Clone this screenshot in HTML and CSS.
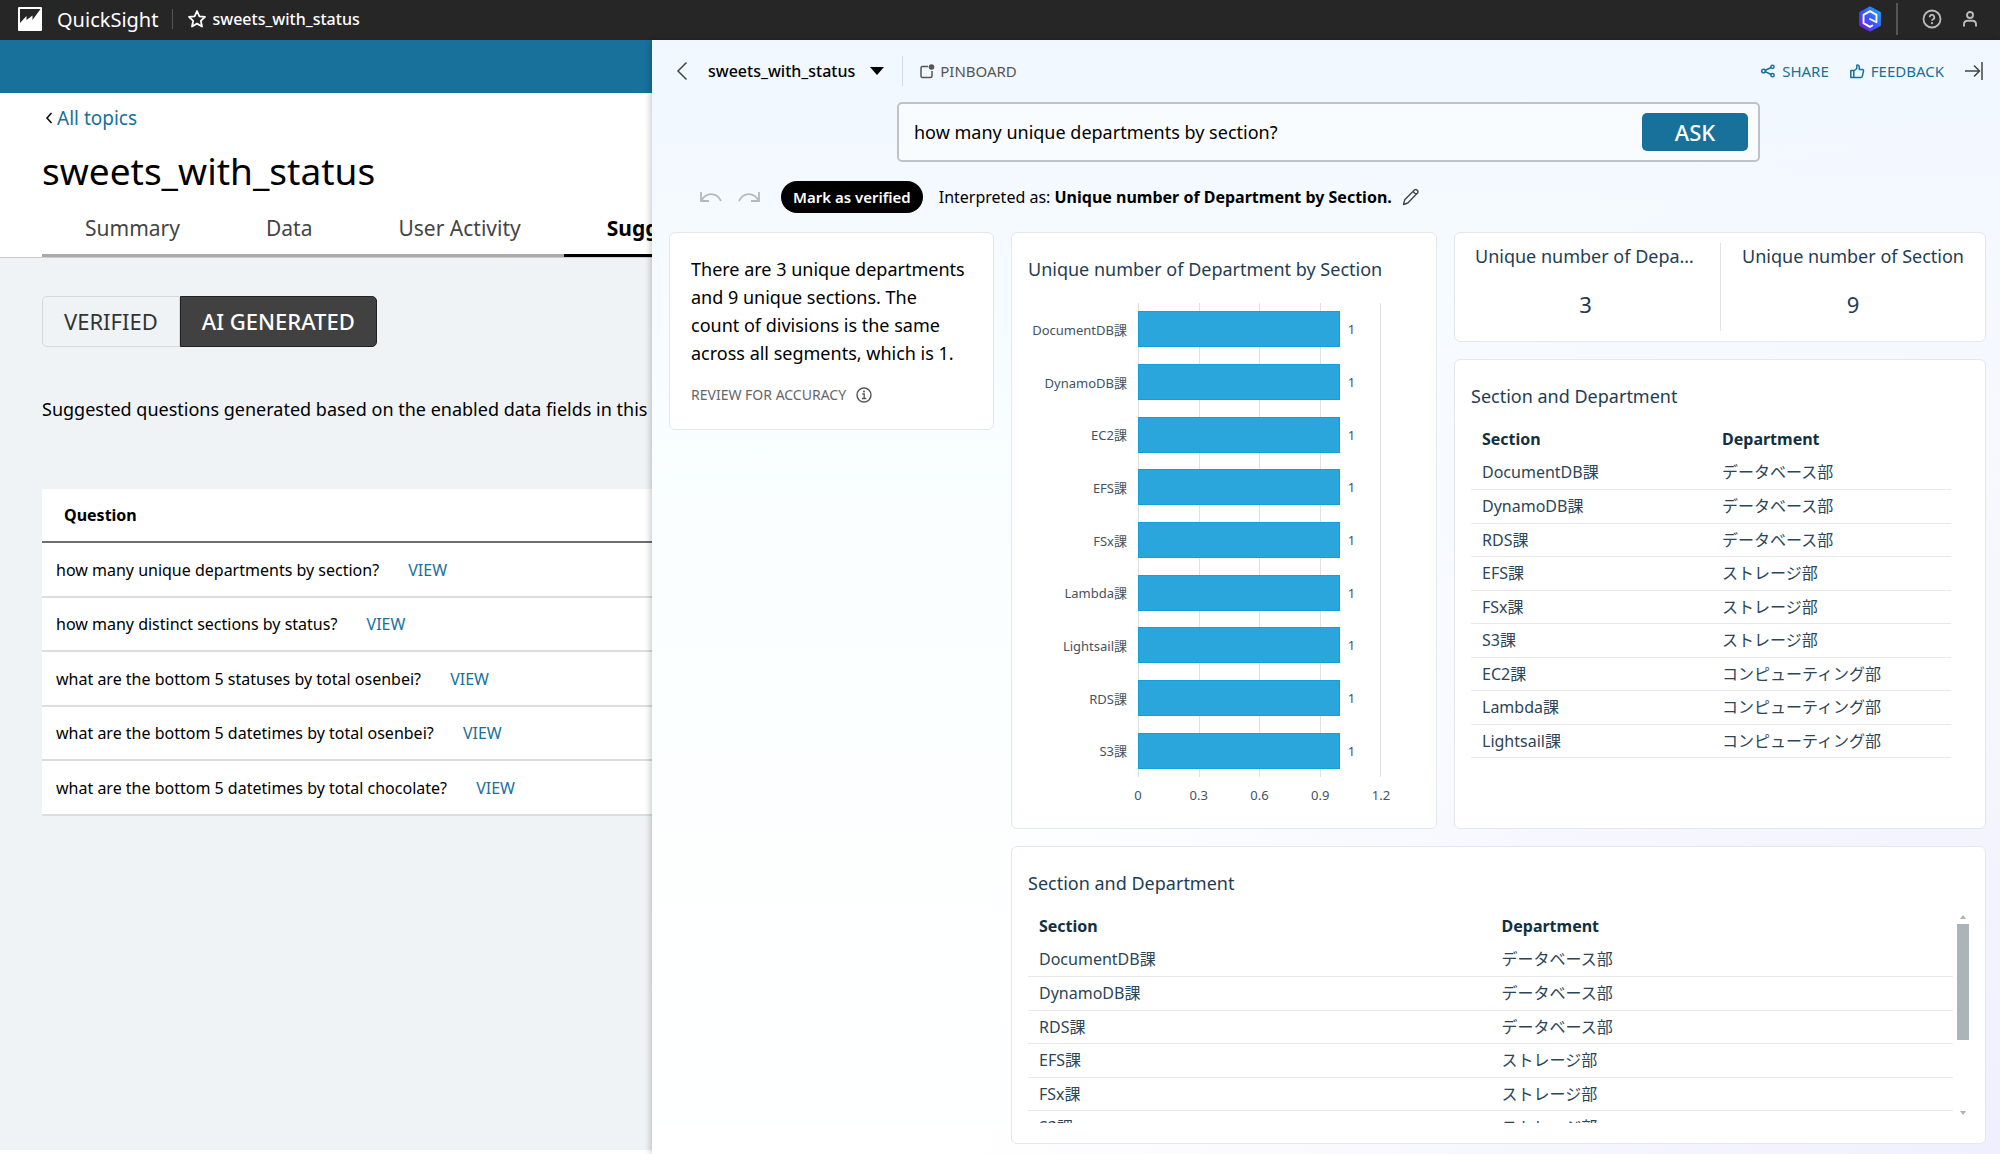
FILE: index.html
```html
<!DOCTYPE html>
<html lang="en">
<head>
  <meta charset="UTF-8" />
  <meta name="viewport" content="width=device-width, initial-scale=1.0"/>
  <title>QuickSight - sweets_with_status</title>
  <link rel="stylesheet" href="styles.css">
</head>
<body>

  <header class="topbar">
    <svg class="logo" viewBox="0 0 26 26"><rect x="1" y="1" width="24" height="24" rx="1" fill="#fff"/><path d="M3 3h20.500L15.500 14V9.500L9.500 14V10L3 17z" fill="#262626"/></svg>
    <span class="brand">QuickSight</span>
    <span class="topbar-divider"></span>
    <svg class="star" viewBox="0 0 20 20"><path d="M10 2l2.400 5.300 5.600.6-4.200 3.900 1.200 5.700-5-2.900-5 2.900 1.200-5.700L2 7.900l5.600-.6z" fill="none" stroke="#fff" stroke-width="1.800" stroke-linejoin="round"/></svg>
    <span class="topic-name">sweets_with_status</span>

    <div class="topbar-right">
      <svg class="q-icon" viewBox="0 0 26 28">
        <defs><linearGradient id="qGrad" x1="1" y1="0" x2="0" y2="1"><stop offset="0" stop-color="#14b4ff"/><stop offset=".5" stop-color="#3b57ff"/><stop offset="1" stop-color="#7a10e0"/></linearGradient></defs>
        <path d="M13 1l11 6v14l-11 6-11-6V7z" fill="url(#qGrad)" stroke="url(#qGrad)" stroke-width="1.500" stroke-linejoin="round"/>
        <path d="M15.500 21L13 22.500l-7-4v-9l7-4 7 4v8L13 14" fill="none" stroke="#fff" stroke-width="2" stroke-linejoin="round" stroke-linecap="round"/>
      </svg>
      <span class="topbar-divider tall"></span>
      <button class="icon-btn help" aria-label="Help"><svg viewBox="0 0 20 20"><circle cx="10" cy="10" r="8.500" fill="none" stroke="#bbb" stroke-width="1.800"/><path d="M7.700 8.200a2.300 2.300 0 1 1 3.400 2c-.8.400-1.100.8-1.100 1.600" fill="none" stroke="#bbb" stroke-width="1.800"/><circle cx="10" cy="14.200" r="1.100" fill="#bbb"/></svg></button>
      <button class="icon-btn" aria-label="Account"><svg viewBox="0 0 20 20"><circle cx="10" cy="6" r="3" fill="none" stroke="#bbb" stroke-width="1.900"/><path d="M4 17.500v-2c0-2.400 1.600-3.700 3.600-3.700h4.800c2 0 3.600 1.300 3.600 3.700v2" fill="none" stroke="#bbb" stroke-width="1.900"/></svg></button>
    </div>
  </header>

  <main class="workspace">

    <section class="topic">
      <div class="banner"></div>

      <div class="topic-head">
        <a class="back-link" href="#"><svg viewBox="0 0 8 14"><path d="M6.500 2L2 7l4.500 5" fill="none" stroke="#000" stroke-width="1.500"/></svg>All topics</a>
        <h1>sweets_with_status</h1>
        <nav class="tabs">
          <a href="#">Summary</a>
          <a href="#">Data</a>
          <a href="#">User Activity</a>
          <a href="#" class="active">Suggested questions</a>
        </nav>
      </div>

      <div class="topic-body">
        <div class="toggle">
          <button>VERIFIED</button>
          <button class="on">AI GENERATED</button>
        </div>

        <p class="hint">Suggested questions generated based on the enabled data fields in this topic.</p>

        <table class="questions">
          <thead>
            <tr><th>Question</th></tr>
          </thead>
          <tbody>
            <tr><td>how many unique departments by section? <a href="#">VIEW</a></td></tr>
            <tr><td>how many distinct sections by status? <a href="#">VIEW</a></td></tr>
            <tr><td>what are the bottom 5 statuses by total osenbei? <a href="#">VIEW</a></td></tr>
            <tr><td>what are the bottom 5 datetimes by total osenbei? <a href="#">VIEW</a></td></tr>
            <tr><td>what are the bottom 5 datetimes by total chocolate? <a href="#">VIEW</a></td></tr>
          </tbody>
        </table>
      </div>
    </section>

    <section class="panel">
      <div class="panel-bar">
        <button class="icon-btn back" aria-label="Back"><svg viewBox="0 0 12 20"><path d="M10.500 1.500L2 10l8.500 8.500" fill="none" stroke="#444" stroke-width="1.500"/></svg></button>
        <button class="topic-select">sweets_with_status <svg viewBox="0 0 14 8"><path d="M0 0h14L7 8z" fill="#000"/></svg></button>
        <button class="pinboard"><svg viewBox="0 0 16 16"><path d="M9 3.500H3.500a1.500 1.500 0 0 0-1.500 1.500v8A1.500 1.500 0 0 0 3.500 14.500h8A1.500 1.500 0 0 0 13 13V8" fill="none" stroke="#555" stroke-width="1.500"/><circle cx="12.500" cy="4" r="2.800" fill="#555"/></svg>PINBOARD</button>
        <div class="panel-actions">
          <a href="#"><svg viewBox="0 0 16 16"><path d="M12 4L4 8l8 4" fill="none" stroke="#17719a" stroke-width="1.500"/><g fill="#f2f7ff" stroke="#17719a" stroke-width="1.500"><circle cx="3.500" cy="8" r="1.800"/><circle cx="12.500" cy="3.800" r="1.600"/><circle cx="12.500" cy="12.200" r="1.600"/></g></svg>SHARE</a>
          <a href="#"><svg viewBox="0 0 16 16"><path d="M1.800 7.500h3v7h-3zM4.800 8l3-2.500V2.200c1.800-.5 2.500.6 2.500 1.800V6.500h3c1 0 1.400.8 1.200 1.600l-1.200 5.200c-.2.800-.7 1.200-1.500 1.200H4.800" fill="none" stroke="#17719a" stroke-width="1.500" stroke-linejoin="round"/></svg>FEEDBACK</a>
          <button class="icon-btn" aria-label="Collapse"><svg viewBox="0 0 20 20"><path d="M1 10h14M10 4.500l5.500 5.500-5.500 5.500M18 1v18" fill="none" stroke="#444" stroke-width="1.500"/></svg></button>
        </div>
      </div>

      <form class="ask">
        <input type="text" aria-label="Ask a question" value="how many unique departments by section?">
        <button type="button">ASK</button>
      </form>

      <div class="interpret">
        <button class="icon-btn undo" aria-label="Undo"><svg viewBox="0 0 24 12"><path d="M2 1v9h8M2.500 9.500C7 1.500 17 .5 22 10" fill="none" stroke="#b5b9bd" stroke-width="1.800"/></svg></button>
        <button class="icon-btn redo" aria-label="Redo"><svg viewBox="0 0 24 12"><path d="M22 1v9h-8M21.500 9.500C17 1.500 7 .5 2 10" fill="none" stroke="#b5b9bd" stroke-width="1.800"/></svg></button>
        <button class="verify">Mark as verified</button>
        <span>Interpreted as: <strong>Unique number of Department by Section.</strong></span>
        <button class="icon-btn edit" aria-label="Edit"><svg viewBox="0 0 18 18"><path d="M1.500 16.500l1.200-4.700L12.500 2c1.800-1.500 4.500 1 3 3L5.800 15zM11 3.500l3 3" fill="none" stroke="#444" stroke-width="1.400" stroke-linejoin="round"/></svg></button>
      </div>

      <div class="cards">
        <article class="card summary">
          <p>There are 3 unique departments and 9 unique sections. The count of divisions is the same across all segments, which is 1.</p>
          <div class="review">REVIEW FOR ACCURACY <svg viewBox="0 0 16 16"><circle cx="8" cy="8" r="7" fill="none" stroke="#555" stroke-width="1.400"/><path d="M6.300 7H8.200v4.500M6 11.500h4.200" fill="none" stroke="#555" stroke-width="1.300"/><circle cx="8" cy="4.600" r="1" fill="#555"/></svg></div>
        </article>

        <article class="card chart-card">
          <h2>Unique number of Department by Section</h2>
          <div class="chart">
            <div class="chart-labels">
              <span>DocumentDB課</span><span>DynamoDB課</span><span>EC2課</span>
              <span>EFS課</span><span>FSx課</span><span>Lambda課</span>
              <span>Lightsail課</span><span>RDS課</span><span>S3課</span>
            </div>
            <div class="plot">
              <div class="grid-lines"><i></i><i></i><i></i><i></i></div>
              <div class="bars">
                <div class="bar-row"><div class="bar" style="width: 83%"></div>1</div>
                <div class="bar-row"><div class="bar" style="width: 83%"></div>1</div>
                <div class="bar-row"><div class="bar" style="width: 83%"></div>1</div>
                <div class="bar-row"><div class="bar" style="width: 83%"></div>1</div>
                <div class="bar-row"><div class="bar" style="width: 83%"></div>1</div>
                <div class="bar-row"><div class="bar" style="width: 83%"></div>1</div>
                <div class="bar-row"><div class="bar" style="width: 83%"></div>1</div>
                <div class="bar-row"><div class="bar" style="width: 83%"></div>1</div>
                <div class="bar-row"><div class="bar" style="width: 83%"></div>1</div>
              </div>
            </div>
            <div class="axis"><span>0</span><span>0.3</span><span>0.6</span><span>0.9</span><span>1.2</span></div>
          </div>
        </article>

        <div class="right-col">
          <article class="card kpis">
            <div class="kpi"><h3>Unique number of Department</h3><span>3</span></div>
            <div class="kpi"><h3>Unique number of Section</h3><span>9</span></div>
          </article>

          <article class="card table-card">
            <h2>Section and Department</h2>
            <table class="data">
              <thead>
                <tr><th>Section</th><th>Department</th></tr>
              </thead>
              <tbody>
                <tr><td>DocumentDB課</td><td>データベース部</td></tr>
                <tr><td>DynamoDB課</td><td>データベース部</td></tr>
                <tr><td>RDS課</td><td>データベース部</td></tr>
                <tr><td>EFS課</td><td>ストレージ部</td></tr>
                <tr><td>FSx課</td><td>ストレージ部</td></tr>
                <tr><td>S3課</td><td>ストレージ部</td></tr>
                <tr><td>EC2課</td><td>コンピューティング部</td></tr>
                <tr><td>Lambda課</td><td>コンピューティング部</td></tr>
                <tr><td>Lightsail課</td><td>コンピューティング部</td></tr>
              </tbody>
            </table>
          </article>
        </div>

        <article class="card wide">
          <h2>Section and Department</h2>
          <div class="scroll-area">
            <table class="data">
              <thead>
                <tr><th>Section</th><th>Department</th></tr>
              </thead>
              <tbody>
                <tr><td>DocumentDB課</td><td>データベース部</td></tr>
                <tr><td>DynamoDB課</td><td>データベース部</td></tr>
                <tr><td>RDS課</td><td>データベース部</td></tr>
                <tr><td>EFS課</td><td>ストレージ部</td></tr>
                <tr><td>FSx課</td><td>ストレージ部</td></tr>
                <tr><td>S3課</td><td>ストレージ部</td></tr>
              </tbody>
            </table>
            <div class="scrollbar">
              <svg viewBox="0 0 6 4"><path d="M0 4h6L3 0z" fill="#a9b3b7"/></svg>
              <div class="thumb"></div>
              <svg viewBox="0 0 6 4"><path d="M0 0h6L3 4z" fill="#a9b3b7"/></svg>
            </div>
          </div>
        </article>
      </div>
    </section>

  </main>

</body>
</html>
```

FILE: styles.css
```css
* {
  box-sizing: border-box;
}

body {
  margin: 0;
  min-height: 100vh;
  display: flex;
  flex-direction: column;
  font-family: "Noto Sans", "Noto Sans CJK JP", sans-serif;
  font-size: 16px;
  color: #000;
  background: #fff;
}

h1, h2, h3, p {
  margin: 0;
  font-weight: normal;
}

a {
  color: #17719a;
  text-decoration: none;
}

button {
  font-family: inherit;
  border: none;
  padding: 0;
  background: none;
  cursor: pointer;
}

svg {
  display: block;
  flex: none;
}

/* top bar */
.topbar {
  height: 40px;
  display: flex;
  align-items: center;
  padding: 0 20px 2px 17px;
  background: #262626;
  color: #fff;
}

.logo {
  width: 26px;
  height: 26px;
}

.brand {
  margin-left: 14px;
  font-size: 20px;
}

.topbar-divider {
  width: 1px;
  height: 20px;
  margin: 0 14px;
  background: #555;
}

.star {
  width: 20px;
  height: 20px;
}

.topic-name {
  margin-left: 5px;
  font-weight: 500;
}

.topbar-right {
  display: flex;
  align-items: center;
  margin-left: auto;
}

.q-icon {
  width: 24px;
  height: 26px;
}

.topbar-divider.tall {
  width: 2px;
  height: 32px;
}

.icon-btn svg {
  width: 20px;
  height: 20px;
}

.help {
  margin: 0 18px 0 10px;
}

.workspace {
  flex: 1;
  display: grid;
  grid-template-columns: 326fr 674fr;
}

/* topic page */
.topic {
  min-width: 0;
  margin-bottom: 4px;
  overflow: hidden;
  background: #eff3f6;
  white-space: nowrap;
}

.banner {
  height: 53px;
  background: #17719a;
}

.topic-head {
  padding: 12px 0 0 42px;
  background: #fff;
  border-bottom: 1px solid #ccc;
}

.back-link {
  display: flex;
  align-items: center;
  gap: 4px;
  height: 26px;
  margin-left: 3px;
  font-size: 19px;
}

.back-link svg {
  width: 8px;
  height: 14px;
}

h1 {
  margin-top: 12px;
  font-size: 37px;
  line-height: 56px;
}

.tabs {
  display: flex;
  margin-top: 6px;
  border-bottom: 3px solid #aaa;
}

.tabs a {
  padding: 7px 43px 0;
  height: 49px;
  line-height: 32px;
  font-size: 21px;
  color: #444;
}

.tabs a.active {
  margin-bottom: -3px;
  height: 52px;
  border-bottom: 3px solid #000;
  color: #000;
  font-weight: bold;
}

.topic-body {
  padding: 38px 0 0 42px;
}

.toggle {
  display: flex;
}

.toggle button {
  height: 51px;
  padding: 0 21px 2px;
  border: 1px solid #d5d9dc;
  border-radius: 5px 0 0 5px;
  font-size: 22px;
  color: #333;
}

.toggle .on {
  background: #414141;
  border-color: #222;
  border-radius: 0 5px 5px 0;
  color: #fff;
  font-weight: 500;
}

.hint {
  margin-top: 48px;
  font-size: 18px;
  line-height: 28px;
}

.questions {
  width: 100%;
  margin-top: 66px;
  border-collapse: collapse;
  background: #fff;
  text-align: left;
}

.questions th {
  height: 53px;
  padding: 0 22px;
  border-bottom: 2px solid #6f6f6f;
}

.questions td {
  height: 54px;
  padding: 0 14px;
  border-bottom: 2px solid #ddd;
}

.questions tr:nth-child(odd) td {
  height: 55px;
}

.questions a {
  margin-left: 25px;
}

/* Q&A panel */
.panel {
  min-width: 0;
  padding: 0 14px 10px 17px;
  position: relative;
  background:
    radial-gradient(circle at 100% 100%, #f0effe, rgba(250,250,255,0) 60%),
    linear-gradient(#f1f7ff, #f8fdff 35%, #fcffff 60%, #fff);
  box-shadow: -2px 0 6px rgba(0,0,0,0.2);
}

.panel-bar {
  display: flex;
  align-items: center;
  height: 62px;
}

.back {
  margin: 0 20px 0 7px;
}

.back svg {
  width: 12px;
}

.topic-select {
  display: flex;
  align-items: center;
  gap: 15px;
  font-size: 16px;
  font-weight: 500;
}

.topic-select svg {
  width: 14px;
  height: 8px;
}

.pinboard {
  display: flex;
  align-items: center;
  gap: 5px;
  height: 30px;
  margin-left: 18px;
  padding-left: 16px;
  border-left: 1px solid #d5dae3;
  font-size: 15px;
  color: #555;
}

.pinboard svg,
.panel-actions a svg {
  width: 16px;
  height: 16px;
}

.panel-actions {
  display: flex;
  align-items: center;
  gap: 20px;
  margin-left: auto;
  padding-right: 2px;
  font-size: 15px;
}

.panel-actions a {
  display: flex;
  align-items: center;
  gap: 6px;
}

.ask {
  display: flex;
  align-items: center;
  height: 60px;
  margin: 0 226px 0 228px;
  padding: 0 10px 0 0;
  background: #f9fcff;
  border: 2px solid #bfc3c7;
  border-radius: 5px;
}

.ask input {
  flex: 1;
  min-width: 0;
  border: none;
  outline: none;
  padding: 0 15px;
  background: none;
  font-family: inherit;
  font-size: 18px;
}

.ask button {
  width: 106px;
  height: 38px;
  border-radius: 5px;
  background: #17719a;
  color: #fff;
  font-size: 22px;
  font-weight: 500;
}

.interpret {
  display: flex;
  align-items: center;
  height: 70px;
  padding-left: 30px;
}

.undo svg,
.redo svg {
  width: 24px;
  height: 12px;
}

.redo {
  margin: 0 20px 0 14px;
}

.verify {
  height: 32px;
  margin-right: 16px;
  padding: 0 12px;
  border-radius: 16px;
  background: #000;
  color: #fff;
  font-size: 15px;
  font-weight: 600;
}

.edit {
  margin-left: 10px;
}

.edit svg {
  width: 18px;
  height: 18px;
}

.cards {
  display: grid;
  grid-template-columns: 325fr 426fr 532fr;
  gap: 17px;
  align-items: start;
}

.card {
  min-width: 0;
  padding: 22px 16px 16px;
  background: #fff;
  border: 1px solid #e4e8ec;
  border-radius: 6px;
}

.card h2 {
  font-size: 18px;
  line-height: 28px;
  color: #1f3d52;
}

.summary {
  padding: 22px 25px 22px 21px;
}

.summary p {
  font-size: 18px;
  line-height: 28px;
}

.review {
  display: flex;
  align-items: center;
  gap: 10px;
  margin-top: 16px;
  font-size: 14px;
  line-height: 24px;
  color: #666;
}

.review svg {
  width: 16px;
  height: 16px;
}

.chart-card {
  align-self: stretch;
}

.chart {
  display: grid;
  grid-template-columns: 99px 1fr;
  column-gap: 11px;
  margin: 20px 39px 0 0;
  font-size: 13px;
  color: #44535f;
}

.chart-labels,
.bars {
  display: flex;
  flex-direction: column;
  height: 474px;
}

.chart-labels span {
  flex: 1;
  display: flex;
  align-items: center;
  justify-content: flex-end;
  white-space: nowrap;
}

.plot {
  display: grid;
}

.grid-lines,
.bars {
  grid-area: 1 / 1;
}

.grid-lines {
  display: grid;
  grid-template-columns: repeat(4, 1fr);
  border-right: 1px solid #dfe2e4;
}

.grid-lines i {
  border-left: 1px solid #dfe2e4;
}

.bar-row {
  flex: 1;
  display: flex;
  align-items: center;
  gap: 8px;
}

.bar {
  height: 36px;
  background: #2aa6dd;
  border: 1px solid #12a0dc;
}

.axis {
  grid-column: 2;
  display: flex;
  justify-content: space-between;
  margin: 6px -20px 0;
  line-height: 24px;
}

.axis span {
  width: 40px;
  text-align: center;
}

.right-col {
  display: flex;
  flex-direction: column;
  gap: 17px;
  min-width: 0;
}

.kpis {
  display: grid;
  grid-template-columns: 1fr 1fr;
  padding: 10px 0;
  color: #1f3d52;
}

.kpi {
  min-width: 0;
  height: 88px;
  padding: 0 24px 0 20px;
  text-align: center;
}

.kpi + .kpi {
  padding: 0 16px;
  border-left: 1px solid #dfe2e4;
}

.kpi h3 {
  overflow: hidden;
  text-overflow: ellipsis;
  white-space: nowrap;
  font-size: 18px;
  line-height: 26px;
}

.kpi span {
  display: block;
  margin-top: 19px;
  font-size: 22px;
  line-height: 32px;
}

.table-card {
  height: 470px;
  padding-right: 34px;
}

.data {
  width: 100%;
  margin-top: 12px;
  border-collapse: collapse;
  table-layout: fixed;
  text-align: left;
  font-size: 16px;
  line-height: 24px;
  color: #2c4557;
}

.data th {
  height: 34px;
  padding: 0 11px;
  color: #12303f;
}

.data td {
  height: 33px;
  padding: 0 11px;
  border-bottom: 1px solid #e6eaec;
}

.data tr:nth-child(even) td {
  height: 34px;
}

.wide {
  grid-column: 2 / 4;
  height: 298px;
}

.scroll-area {
  display: flex;
  gap: 4px;
  height: 214px;
  margin-top: 12px;
  overflow: hidden;
}

.scroll-area .data {
  flex: 1;
  margin: 0;
}

.scrollbar {
  display: flex;
  flex-direction: column;
  align-items: center;
  width: 12px;
  padding: 6px 0 8px;
}

.scrollbar svg {
  width: 6px;
  height: 4px;
}

.thumb {
  width: 12px;
  height: 116px;
  margin: 5px 0 auto;
  background: #abb5b9;
}
```
